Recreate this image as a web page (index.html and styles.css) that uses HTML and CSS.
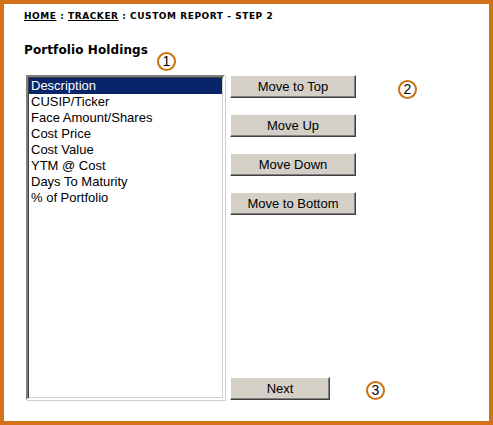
FILE: index.html
```html
<!DOCTYPE html>
<html>
<head>
<meta charset="utf-8">
<link rel="stylesheet" href="styles.css">
</head>
<body>
<div class="frame">
  <div class="crumbs"><a class="crumb-link">HOME</a> : <a class="crumb-link">TRACKER</a> : CUSTOM REPORT - STEP 2</div>
  <h1 class="title">Portfolio Holdings</h1>
  <div class="main">
    <div class="listbox">
      <div class="item selected">Description</div>
      <div class="item">CUSIP/Ticker</div>
      <div class="item">Face Amount/Shares</div>
      <div class="item">Cost Price</div>
      <div class="item">Cost Value</div>
      <div class="item">YTM @ Cost</div>
      <div class="item">Days To Maturity</div>
      <div class="item">% of Portfolio</div>
    </div>
    <div class="actions">
      <div class="move-group">
        <button class="btn btn-wide">Move to Top</button>
        <button class="btn btn-wide">Move Up</button>
        <button class="btn btn-wide">Move Down</button>
        <button class="btn btn-wide">Move to Bottom</button>
      </div>
      <button class="btn btn-next">Next</button>
    </div>
  </div>
  <span class="callout callout-1">1</span>
  <span class="callout callout-2">2</span>
  <span class="callout callout-3">3</span>
</div>
</body>
</html>
```
FILE: styles.css
```css
html, body {
  margin: 0;
  padding: 0;
  background: #ffffff;
}
.frame {
  position: relative;
  box-sizing: border-box;
  width: 493px;
  height: 425px;
  border: 4px solid #d3701a;
  padding: 6px 0 0 20px;
  font-family: "DejaVu Sans", Verdana, sans-serif;
  color: #000;
}
.crumbs {
  font-size: 9px;
  font-weight: bold;
  letter-spacing: 0.55px;
  line-height: 12px;
}
.crumb-link {
  text-decoration: underline;
  color: #000;
}
.title {
  margin: 20px 0 0 0;
  font-size: 12px;
  font-weight: bold;
  letter-spacing: 0.1px;
  line-height: 16px;
}
.main {
  display: flex;
  margin-top: 17px;
  margin-left: 2px;
  height: 325px;
}
.listbox {
  box-sizing: border-box;
  width: 199px;
  height: 325px;
  border-style: solid;
  border-width: 2px;
  border-color: #808080 #ffffff #ffffff #808080;
  box-shadow: inset 1px 1px 0 #404040, inset -1px -1px 0 #d4d0c8, 1px 1px 0 #d4d0c8;
  padding: 1px;
  font-family: "Liberation Sans", Arial, sans-serif;
  font-size: 13px;
  line-height: 16px;
}
.item {
  padding-left: 2px;
  height: 16px;
  white-space: nowrap;
}
.selected {
  background: #0a246a;
  color: #ffffff;
}
.actions {
  display: flex;
  flex-direction: column;
  justify-content: space-between;
  margin-left: 5px;
}
.move-group {
  display: flex;
  flex-direction: column;
  gap: 16px;
}
.btn {
  box-sizing: border-box;
  height: 23px;
  padding: 0;
  background: #d4d0c8;
  border-style: solid;
  border-width: 1px;
  border-color: #ffffff #404040 #404040 #ffffff;
  box-shadow: inset -1px -1px 0 #808080;
  font-family: "Liberation Sans", Arial, sans-serif;
  font-size: 13px;
  color: #000;
}
.btn-wide {
  width: 126px;
}
.btn-next {
  width: 100px;
}
.callout {
  position: absolute;
  box-sizing: border-box;
  width: 19px;
  height: 19px;
  border: 2px solid #c9700f;
  border-radius: 50%;
  background: #fff;
  font-family: "Liberation Sans", Arial, sans-serif;
  font-size: 14px;
  line-height: 15px;
  text-align: center;
  color: #000;
}
.callout-1 { left: 153px; top: 48px; }
.callout-2 { left: 394px; top: 76px; }
.callout-3 { left: 362px; top: 377px; }
```
